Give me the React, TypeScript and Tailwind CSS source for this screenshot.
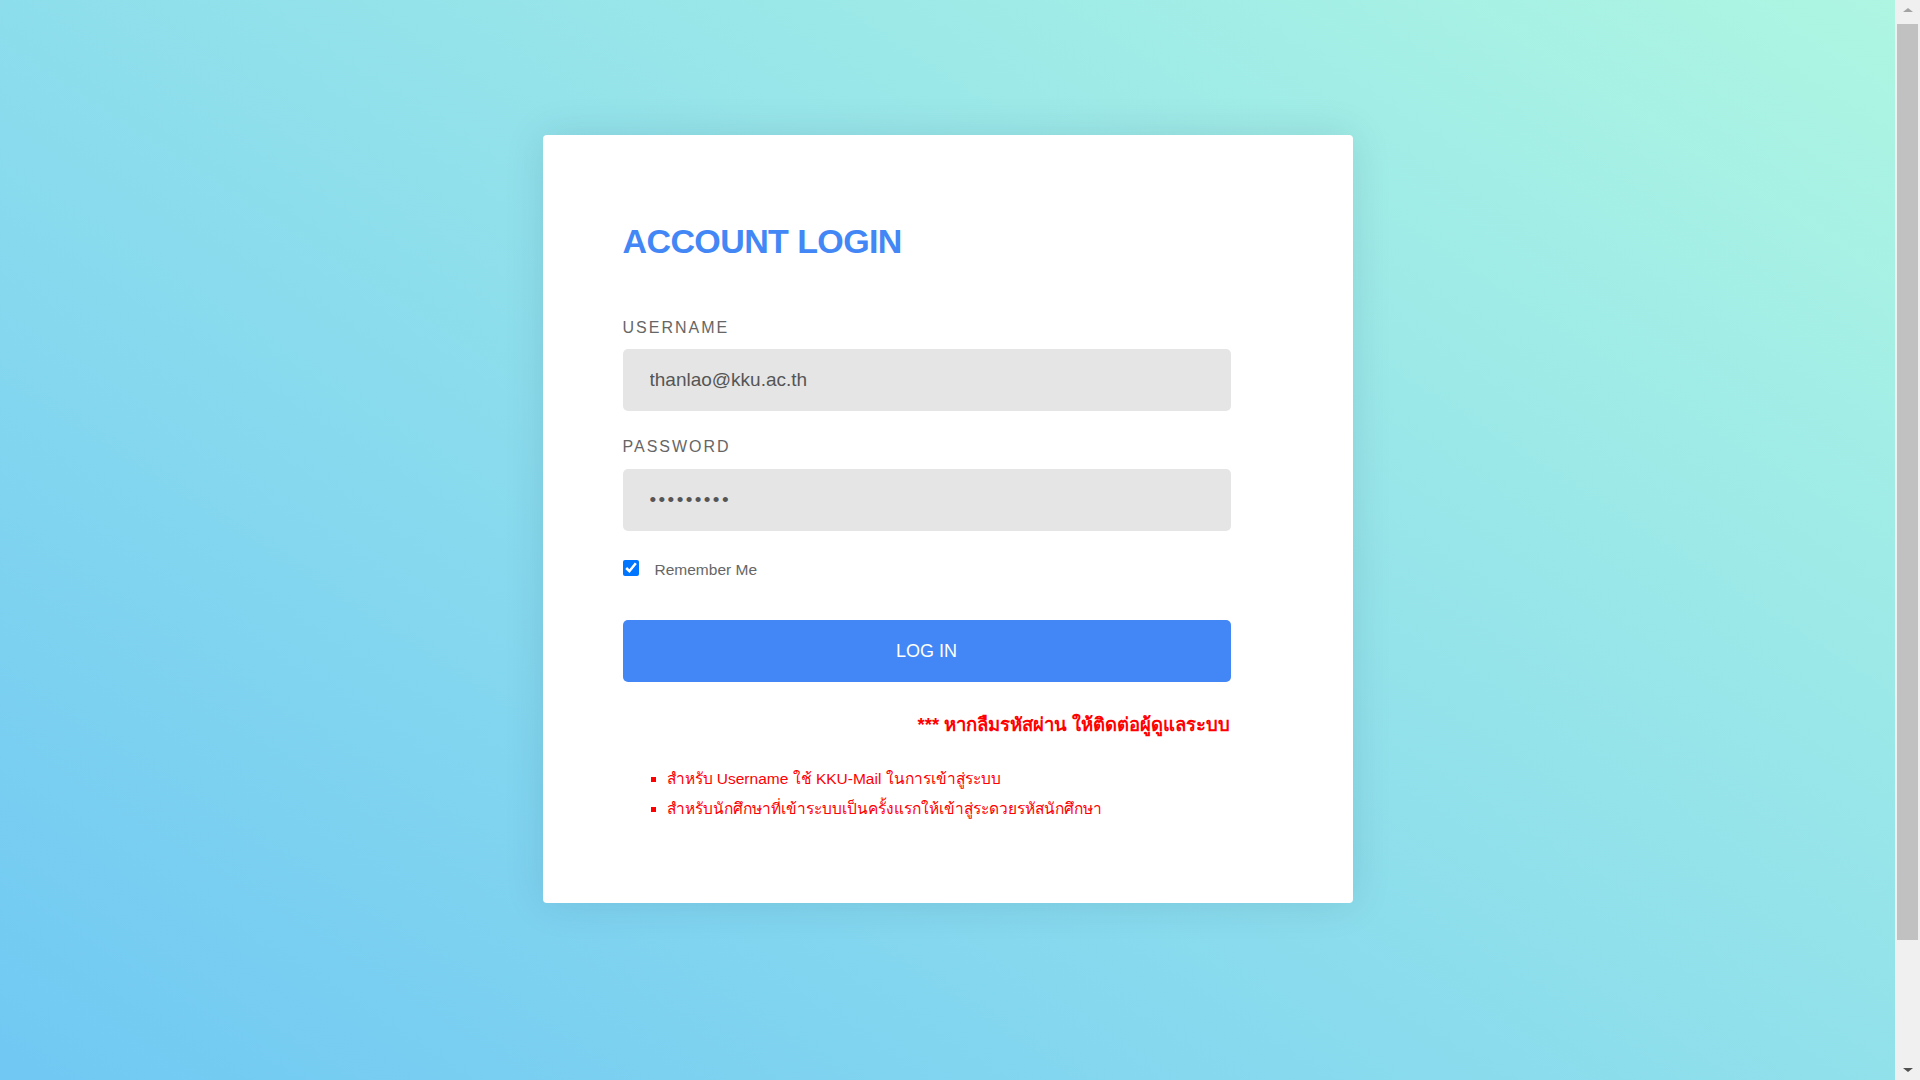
const Scrollbar = () => {
  return (
    <div className="w-[25px] h-full bg-[#f0f0f0] flex flex-col items-center shrink-0">
      <div className="h-[24px] w-full flex items-center justify-center">
        <div className="w-0 h-0 border-x-[5px] border-x-transparent border-b-[4px] border-b-[#a3a3a3] -mt-[4px]" />
      </div>
      <div className="w-[21px] h-[916px] bg-[#c1c1c1]" />
      <div className="flex-1 w-full flex items-end justify-center pb-[8px]">
        <div className="w-0 h-0 border-x-[5px] border-x-transparent border-t-[4px] border-t-[#505050]" />
      </div>
    </div>
  );
};

const App = () => {
  return (
    <div
      className="h-[1080px] w-full flex overflow-hidden"
      style={{ fontFamily: '"Liberation Sans", "Noto Sans", sans-serif' }}
    >
      <div className="flex-1 h-full overflow-hidden">
        <div className="min-h-[1234px] w-full bg-gradient-to-tr from-[#6cc5f4] to-[#aef6e2] pt-[135px]">
          <div className="mx-auto w-[810px] h-[768px] bg-white rounded-[4px] shadow-[0_0_40px_rgba(0,40,80,0.12)] pl-[80px] pt-[89px]">
            <div className="w-[608px]">
              <h1 className="text-[34px] leading-none font-bold text-[#4287f5] tracking-[-0.6px]">
                ACCOUNT LOGIN
              </h1>

              <label className="block mt-[62px] text-[16px] leading-none tracking-[2px] text-[#666]">
                USERNAME
              </label>
              <input
                type="text"
                readOnly
                defaultValue="thanlao@kku.ac.th"
                className="mt-[13px] w-full h-[62px] rounded-[5px] bg-[#e5e5e5] px-[27px] text-[19px] text-[#555] outline-none"
              />

              <label className="block mt-[28px] text-[16px] leading-none tracking-[2px] text-[#666]">
                PASSWORD
              </label>
              <input
                type="password"
                readOnly
                defaultValue="123456789"
                className="mt-[14px] w-full h-[62px] rounded-[5px] bg-[#e5e5e5] px-[27px] text-[19px] tracking-[2.4px] text-[#555] outline-none"
              />

              <div className="mt-[28px] flex items-center h-[17px]">
                <input
                  type="checkbox"
                  defaultChecked
                  className="w-4 h-4 m-0 accent-[#0075ff]"
                />
                <span className="ml-[16px] mt-[4px] text-[15.5px] text-[#666]">
                  Remember Me
                </span>
              </div>

              <button className="mt-[44px] w-full h-[62px] rounded-[5px] bg-[#4287f5] text-white text-[18px]">
                LOG IN
              </button>

              <p className="mt-[29px] text-right text-[18.5px] font-bold text-[#ff0000]">
                *** หากลืมรหัสผ่าน ให้ติดต่อผู้ดูแลระบบ
              </p>

              <ul className="mt-[25px] pl-[44px] list-[square] text-[15.5px] leading-[30px] text-[#ff0000]">
                <li>สำหรับ Username ใช้ KKU-Mail ในการเข้าสู่ระบบ</li>
                <li>สำหรับนักศึกษาที่เข้าระบบเป็นครั้งแรกให้เข้าสู่ระดวยรหัสนักศึกษา</li>
              </ul>
            </div>
          </div>
        </div>
      </div>
      <Scrollbar />
    </div>
  );
};

export default App;
